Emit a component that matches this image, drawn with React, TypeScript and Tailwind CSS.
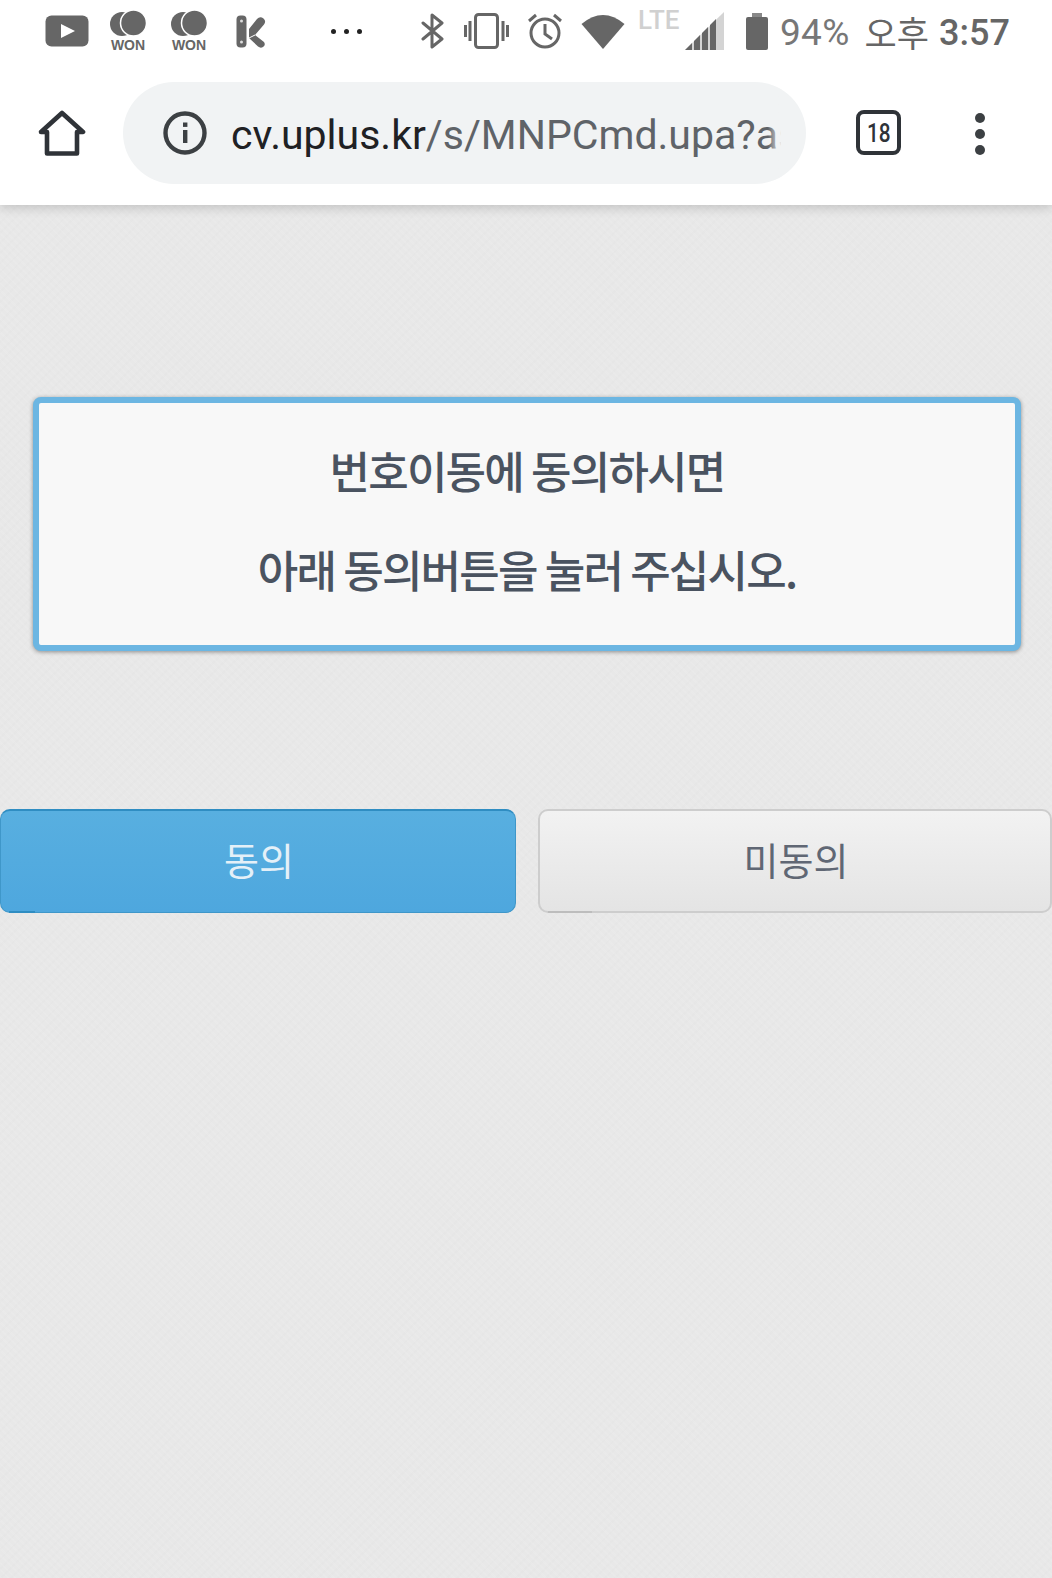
import React from 'react';

const sans = "font-['Roboto','Noto_Sans_CJK_KR',sans-serif]";
const kr = "font-['Noto_Sans_CJK_KR','Noto_Sans',sans-serif]";

const WonIcon = ({ className }: { className: string }) => (
  <div className={`flex w-[40px] flex-col items-center ${className}`}>
    <svg width="38" height="27" viewBox="0 0 38 27">
      <circle cx="13" cy="14" r="12" fill="#666" />
      <circle cx="24.5" cy="13" r="13" fill="#666" stroke="#fff" strokeWidth="1.5" />
    </svg>
    <span className="mt-[1px] font-['Liberation_Sans',sans-serif] text-[14px] leading-[14px] font-bold text-[#666]">WON</span>
  </div>
);

const StatusBar = () => (
  <div className={`relative z-20 flex h-[70px] items-center bg-white pb-[8px] pl-[45px] ${sans}`}>
    {/* youtube */}
    <svg width="44" height="32" viewBox="0 0 44 32">
      <rect x="0.5" y="0.5" width="43" height="31" rx="6" fill="#666" />
      <path d="M16 9 L30 16 L16 23 Z" fill="#fff" />
    </svg>
    <WonIcon className="ml-[19px]" />
    <WonIcon className="ml-[21px]" />
    {/* knife style K */}
    <svg className="ml-[27px]" width="30" height="33" viewBox="0 0 30 33">
      <rect x="0.5" y="0.5" width="10" height="32" rx="4" fill="#666" />
      <circle cx="5.5" cy="6" r="1.5" fill="#ddd" />
      <circle cx="5.5" cy="27" r="1.5" fill="#ddd" />
      <path d="M13 14 L21 4 Q24 1 27.5 3.5 Q30.5 6 28 9.5 L19 20 L28 27 Q30 30 27 32 Q24.5 33.5 22 31.5 L13 23 Z" fill="#666" />
      <path d="M13 23 L19 20" stroke="#fff" strokeWidth="1" />
    </svg>
    {/* overflow dots */}
    <div className="ml-[65px] flex gap-[8px]">
      <div className="h-[5px] w-[5px] rounded-full bg-[#222]" />
      <div className="h-[5px] w-[5px] rounded-full bg-[#222]" />
      <div className="h-[5px] w-[5px] rounded-full bg-[#222]" />
    </div>
    {/* bluetooth */}
    <svg className="ml-[59px]" width="24" height="36" viewBox="0 0 24 36" fill="none" stroke="#666" strokeWidth="3" strokeLinejoin="round" strokeLinecap="round">
      <path d="M2 10 L21 26 L11 34 L11 2 L21 10 L2 26" />
    </svg>
    {/* vibrate */}
    <svg className="ml-[19px]" width="45" height="36" viewBox="0 0 45 36" fill="none" stroke="#666" strokeWidth="3">
      <rect x="11.5" y="1.5" width="22" height="33" rx="3" />
      <path d="M6 8 V28 M1.5 12 V24 M39 8 V28 M43.5 12 V24" />
    </svg>
    {/* alarm */}
    <svg className="ml-[18px]" width="36" height="36" viewBox="0 0 36 36" fill="none" stroke="#666" strokeWidth="3">
      <circle cx="18" cy="20" r="14" />
      <path d="M18 11 V21 L25 26 M2 8 L9 2 M34 8 L27 2" />
    </svg>
    {/* wifi */}
    <svg className="ml-[18px]" width="44" height="36" viewBox="0 0 44 36">
      <path d="M0.5 11 Q22 -7 43.5 11 L22 36 Z" fill="#666" />
    </svg>
    {/* LTE + signal */}
    <div className="relative ml-[13px] h-[38px] w-[87px]">
      <span className="absolute top-[-7px] left-[0px] text-[26px] leading-[30px] font-medium text-[#d0d0d0]">LTE</span>
      <svg className="absolute top-0 left-[47px]" width="40" height="38" viewBox="0 0 40 38">
        <path d="M0 38 L39 0 V38 Z" fill="#d4d4d4" />
        <path d="M0 38 L7 31 V38 Z M9 38 V29 L15 23 V38 Z M17 38 V21 L23 15 V38 Z M25 38 V13 L31 7 V38 Z" fill="#666" />
      </svg>
    </div>
    {/* battery */}
    <svg className="ml-[21px]" width="22" height="37" viewBox="0 0 22 37">
      <rect x="6" y="0" width="10" height="4" fill="#888" />
      <rect x="0" y="4" width="22" height="33" rx="2" fill="#666" />
    </svg>
    <span className="mt-[3px] ml-[12px] text-[37px] leading-[40px] tracking-[0.3px] text-[#777]">94%</span>
    <span className={`mt-[2px] ml-[15px] text-[35px] leading-[40px] text-[#666] ${kr}`}>오후</span>
    <span className="mt-[3px] ml-[10px] text-[36px] leading-[40px] font-medium text-[#666]">3:57</span>
  </div>
);

const Toolbar = () => (
  <div className="relative z-10 flex h-[135px] items-start bg-white shadow-[0_3px_10px_rgba(0,0,0,0.16)]">
    <svg className="mt-[40px] ml-[38px]" width="48" height="46" viewBox="0 0 48 46" fill="none" stroke="#2f3338" strokeWidth="4.6" strokeLinejoin="round">
      <path d="M3 22 L24 3 L45 22 H39 V43.5 H9 V22 Z" />
    </svg>
    <div className="relative mt-[12px] ml-[37px] flex h-[102px] w-[683px] items-center overflow-hidden rounded-[51px] bg-[#f1f3f4] pl-[40px]">
      <svg className="shrink-0" width="44" height="44" viewBox="0 0 44 44" fill="none">
        <circle cx="22" cy="22" r="19.5" stroke="#3c4043" strokeWidth="4.4" />
        <rect x="20" y="19" width="4.4" height="13" fill="#3c4043" />
        <rect x="20" y="11.5" width="4.4" height="4.4" fill="#3c4043" />
      </svg>
      <div className="mt-[4px] ml-[24px] w-[550px] overflow-hidden font-['Roboto',sans-serif] text-[41px] leading-[50px] whitespace-nowrap text-[#5f6368]">
        <span className="text-[#202124]">cv.uplus.kr</span>/s/MNPCmd.upa?as
      </div>
      {/* url fade at the right */}
      <div className="absolute top-0 right-[24px] bottom-0 w-[14px] bg-gradient-to-r from-[#f1f3f4]/0 to-[#f1f3f4]" />
    </div>
    <div className="mt-[40px] ml-[50px] flex h-[45px] w-[45px] items-center justify-center rounded-[8px] border-[4.4px] border-[#2f3338] font-['Roboto',sans-serif] text-[26px] leading-none font-medium text-[#2f3338]">
      <span className="scale-x-[0.8]">18</span>
    </div>
    <div className="mt-[43px] ml-[74px] flex flex-col gap-[6px]">
      <div className="h-[10px] w-[10px] rounded-full bg-[#3c4043]" />
      <div className="h-[10px] w-[10px] rounded-full bg-[#3c4043]" />
      <div className="h-[10px] w-[10px] rounded-full bg-[#3c4043]" />
    </div>
  </div>
);

export default function App() {
  return (
    <div className="flex min-h-[1578px] w-[1052px] flex-col overflow-hidden bg-white">
      <StatusBar />
      <Toolbar />
      <div className={`flex flex-1 flex-col bg-[#e8e8e8] bg-[repeating-linear-gradient(45deg,rgba(255,255,255,0.07)_0_2px,transparent_2px_5px),repeating-linear-gradient(-45deg,rgba(0,0,0,0.008)_0_2px,transparent_2px_7px)] ${kr}`}>
        <div className="mt-[192px] mr-[31px] ml-[33px] flex h-[254px] flex-col items-center justify-center rounded-[8px] border-[6px] border-[#6cb6e2] bg-[#f8f8f8] pb-[10px] text-[44px] leading-[100px] font-medium tracking-[-1.8px] text-[#4a5360] shadow-[0_1px_4px_rgba(0,0,0,0.4)]">
          <p>번호이동에 동의하시면</p>
          <p className="-mt-[1px]">아래 동의버튼을 눌러 주십시오.</p>
        </div>
        <div className="mt-[158px] flex gap-[22px] text-[38px] leading-none">
          <button className="relative flex h-[104px] w-[516px] items-center justify-center rounded-[10px] border border-[#3f97c9] border-t-2 border-t-[#2f8dc2] bg-gradient-to-b from-[#58afe0] to-[#4ea7de] pb-[5px] pl-[2px] text-[#e4f0f8]">
            동의
            <span className="absolute bottom-[-1px] left-[8px] h-[2px] w-[26px] bg-[#2f8dc2]" />
          </button>
          <button className="relative flex h-[104px] flex-1 items-center justify-center rounded-[10px] border-2 border-[#cdcdcd] bg-gradient-to-b from-[#f2f2f2] to-[#e4e4e4] pb-[5px] pl-[2px] text-[#606774]">
            미동의
            <span className="absolute bottom-[-2px] left-[8px] h-[2px] w-[44px] bg-[#bdbdbd]" />
          </button>
        </div>
      </div>
    </div>
  );
}
